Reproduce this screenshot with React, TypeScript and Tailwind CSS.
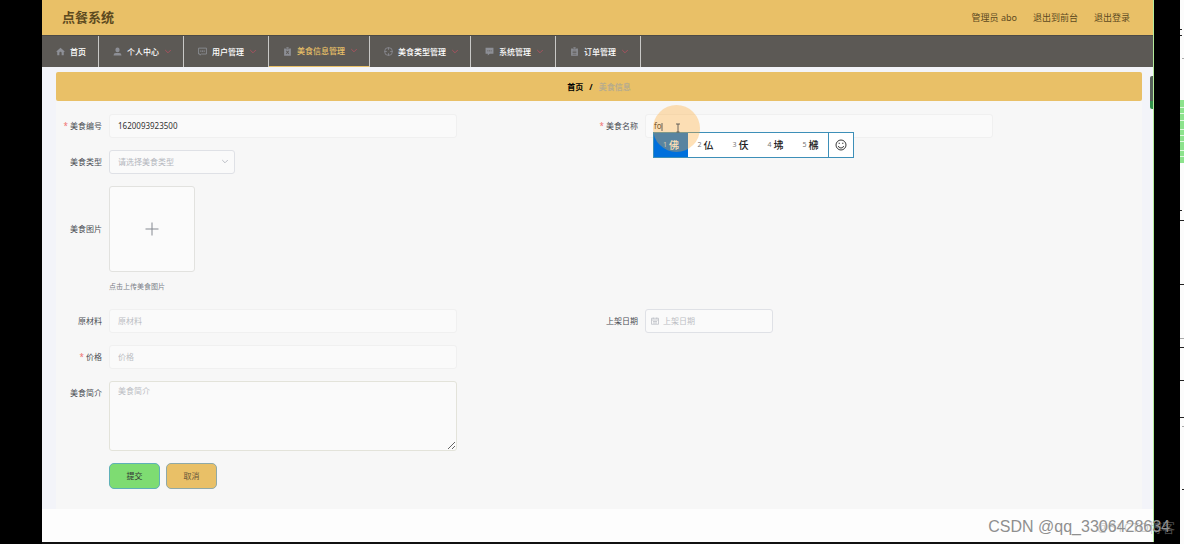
import type { ReactNode } from "react";

const iconPaths: Record<string, ReactNode> = {
  home: (
    <path
      fill="currentColor"
      d="M8 1.500 1 7.600v1.200h1.200V14a.8.8 0 0 0 .8.8h3V10.500a2 2 0 0 1 4 0v4.300h3a.8.8 0 0 0 .8-.8V8.800H15V7.600z"
    />
  ),
  user: (
    <path
      fill="currentColor"
      d="M8 1a3.700 3.700 0 0 0-3.700 3.700v1.100a3.700 3.700 0 0 0 7.400 0V4.700A3.700 3.700 0 0 0 8 1zM5 10.500A4 4 0 0 0 1 14.500V15h14v-.5a4 4 0 0 0-4-4z"
    />
  ),
  chat: (
    <>
      <path fill="none" stroke="currentColor" strokeWidth="1.500" d="M1 2h14v10.500H6L3.500 14.500v-2H1z" />
      <path fill="currentColor" d="M4 6.300h2v2H4zM7 6.300h2v2H7zM10 6.300h2v2h-2z" />
    </>
  ),
  claim: (
    <>
      <path fill="currentColor" fillRule="evenodd" d="M2 2.500h3V4h6V2.500h3V15.500H2zM5 7l2 2.500L5 12l1 1 2-2.200 2 2.200 1-1-2-2.500L11 7l-1-1-2 2.200L6 6z" />
      <path fill="currentColor" d="M6 .5h4V3H6z" />
    </>
  ),
  aim: (
    <g fill="none" stroke="currentColor" strokeWidth="1.400">
      <circle cx="8" cy="8" r="7" />
      <path d="M8 1v4M8 11v4M1 8h4M11 8h4" />
    </g>
  ),
  message: (
    <path fill="currentColor" fillRule="evenodd" d="M1 1.500h14v10.500H8.500L5 15v-3H1zM4 6v1.500h2V6zm3 0v1.500h2V6zm3 0v1.500h2V6z" />
  ),
  order: (
    <>
      <path fill="currentColor" fillRule="evenodd" d="M2 2.500h3V4h6V2.500h3V15.500H2zM4.500 6.500V8h7V6.500zm0 3V11h7V9.500zm0 3v1h7v-1z" />
      <path fill="currentColor" d="M6 .5h4V3H6z" />
    </>
  ),
};

function Icon({ name }: { name: string }) {
  return (
    <svg viewBox="0 0 16 16" className="size-[9px] shrink-0 text-[#8d8f96]" aria-hidden="true">
      {iconPaths[name]}
    </svg>
  );
}

function Chevron({ className }: { className: string }) {
  return (
    <svg viewBox="0 0 10 10" className={className} fill="none" stroke="currentColor" strokeWidth="1.200" aria-hidden="true">
      <path d="M1.500 2.500l3.500 3.500 3.500-3.500" />
    </svg>
  );
}

const menus = [
  { icon: "user", label: "个人中心" },
  { icon: "chat", label: "用户管理" },
  { icon: "claim", label: "美食信息管理", active: true },
  { icon: "aim", label: "美食类型管理" },
  { icon: "message", label: "系统管理" },
  { icon: "order", label: "订单管理" },
];

function Header() {
  return (
    <header className="flex h-[35px] items-center justify-between bg-[#e9c067] pr-6 pl-5 text-[#5d4a1f]">
      <h1 className="text-[13px] font-bold">点餐系统</h1>
      <div className="flex gap-4 text-[9px]">
        <span>管理员 abo</span>
        <a href="#front">退出到前台</a>
        <a href="#logout">退出登录</a>
      </div>
    </header>
  );
}

function Nav() {
  return (
    <nav className="flex h-8 border-t border-[#4c4a46] bg-[#5c5955] text-[8px] font-medium text-white">
      <a href="#home" className="flex items-center gap-[5px] border-r border-[#c9c8c6] pr-[12px] pl-[14px]">
        <Icon name="home" />
        首页
      </a>
      {menus.map((m) => (
        <a
          key={m.label}
          href={"#" + m.icon}
          className={
            m.active
              ? "flex items-center border-r border-b border-r-[#c9c8c6] border-b-[#e9c067] pr-[11px] pl-[14px] text-[#e9c067]"
              : "flex items-center border-r border-[#c9c8c6] pr-[11px] pl-[14px]"
          }
        >
          <Icon name={m.icon} />
          <span className="mx-[5px]">{m.label}</span>
          <Chevron className="size-2 text-[#a8525e]" />
        </a>
      ))}
    </nav>
  );
}

function Field({ id, label, required, tall, children }: { id: string; label: string; required?: boolean; tall?: boolean; children: ReactNode }) {
  return (
    <div className="flex items-start">
      <label
        htmlFor={id}
        className={
          tall
            ? "flex h-[86px] w-[46px] shrink-0 items-center justify-end pr-[7px] whitespace-nowrap"
            : "flex h-6 w-[46px] shrink-0 items-center justify-end pr-[7px] whitespace-nowrap"
        }
      >
        {required && <span className="mr-[2px] text-[#f07070]">*</span>}
        {label}
      </label>
      {children}
    </div>
  );
}

const inputClass =
  "h-6 w-[65%] rounded-[3px] border border-[#f0f0f0] bg-[#fafafa] px-2 pb-[2px] text-[8px] text-[#333] placeholder:text-[#bcbec4] outline-none";

function Ime() {
  const words = ["佛", "仏", "仸", "坲", "梻"];
  return (
    <div className="absolute top-[18px] left-2 z-10 flex h-[26px] w-[201px] border border-[#3d8fb8] bg-white text-[#222]">
      {words.map((w, i) => (
        <span
          key={w}
          className={
            i === 0
              ? "flex w-[34px] items-center justify-center gap-[2px] bg-[#0070dc] text-[10px] font-medium text-white"
              : "flex w-[35px] items-center justify-center gap-[2px] text-[10px] font-medium"
          }
        >
          <span className={i === 0 ? "text-[7px] font-normal text-[#c5dcee]" : "text-[7px] font-normal text-[#777]"}>{i + 1}</span>
          {w}
        </span>
      ))}
      <span className="flex flex-1 items-center justify-center border-l border-[#3d8fb8]">
        <svg viewBox="0 0 12 12" className="size-3" fill="none" stroke="#222" strokeWidth="0.900" aria-hidden="true">
          <circle cx="6" cy="6" r="5" />
          <path d="M3.300 7a2.800 2.800 0 0 0 5.400 0" />
          <path d="M4.200 3.700v1.300M7.800 3.700v1.300" />
        </svg>
      </span>
    </div>
  );
}

function FoodForm() {
  return (
    <form className="grid gap-y-3 bg-[#f7f7f7] px-[7px] pt-[13px] pb-5 text-[8px] text-[#4c4f55]">
      <div className="grid grid-cols-2">
        <Field id="code" label="美食编号" required>
          <input id="code" defaultValue="1620093923500" className={inputClass} />
        </Field>
        <Field id="name" label="美食名称" required>
          <div className="relative flex flex-1">
            <input id="name" defaultValue="fo" className="h-6 w-[71%] rounded-[3px] border border-[#f0f0f0] bg-[#fafafa] px-2 pb-[2px] text-[8px] text-[#333] outline-none" />
            <Ime />
            <span className="absolute -top-[9px] left-2 z-20 size-[47px] rounded-full bg-[#ffaa32]/35" />
            <svg viewBox="0 0 26 10" className="absolute top-[9px] left-[16px] z-30 h-[10px] w-[26px]" fill="none" stroke="#444" strokeWidth="0.800" aria-hidden="true">
              <path d="M1 0v8M15 1h4M17 1v8M15.500 9h3" />
            </svg>
          </div>
        </Field>
      </div>

      <Field id="kind" label="美食类型">
        <div className="relative">
          <select id="kind" className="h-6 w-[126px] appearance-none rounded-[3px] border border-[#dfe1e6] bg-[#fafafa] px-2 text-[8px] text-[#b4b7be] outline-none">
            <option>请选择美食类型</option>
          </select>
          <Chevron className="pointer-events-none absolute top-2 right-[6px] size-2 text-[#b9bcc3]" />
        </div>
      </Field>

      <Field id="picture" label="美食图片" tall>
        <div>
          <button id="picture" type="button" aria-label="点击上传美食图片" className="flex size-[86px] items-center justify-center rounded-[3px] border border-[#e2e2df] bg-[#fbfbfb]">
            <svg viewBox="0 0 14 14" className="size-[14px]" stroke="#858991" aria-hidden="true">
              <path d="M7 .5v13M.5 7h13" />
            </svg>
          </button>
          <p className="mt-1 h-[21px] text-[7px] leading-[21px] text-[#7b7f87]">点击上传美食图片</p>
        </div>
      </Field>

      <div className="grid grid-cols-2">
        <Field id="material" label="原材料">
          <input id="material" placeholder="原材料" className={inputClass} />
        </Field>
        <Field id="date" label="上架日期">
          <div className="relative">
            <input id="date" placeholder="上架日期" className="h-6 w-[128px] rounded-[3px] border border-[#dfe1e6] bg-[#fafafa] pr-2 pb-[2px] pl-[17px] text-[8px] placeholder:text-[#bcbec4] outline-none" />
            <svg viewBox="0 0 16 16" className="absolute top-2 left-[6px] size-2" fill="none" stroke="#b9bcc3" strokeWidth="1.500" aria-hidden="true">
              <path d="M1 2.500h14v12H1zM1 6h14M4.500 1v3M11.500 1v3M4 9h8M4 12h8" />
            </svg>
          </div>
        </Field>
      </div>

      <div className="grid grid-cols-2">
        <Field id="price" label="价格" required>
          <input id="price" placeholder="价格" className={inputClass} />
        </Field>
      </div>

      <div className="grid grid-cols-2">
        <Field id="intro" label="美食简介">
          <textarea
            id="intro"
            placeholder="美食简介"
            className="block h-[70px] w-[65%] resize rounded-[3px] border border-[#e3e3da] bg-[#fafafa] px-2 py-[3px] text-[8px] leading-3 placeholder:text-[#bcbec4] outline-none"
          />
        </Field>
      </div>

      <div className="flex gap-[6px] pl-[46px]">
        <button type="submit" className="h-[26px] w-[51px] rounded-[5px] border border-[#5fb0b8] bg-[#7edc72] text-[#333]">
          提交
        </button>
        <button type="button" className="h-[26px] w-[51px] rounded-[5px] border border-[#8fa9a8] bg-[#e9c067] text-[#66573a]">
          取消
        </button>
      </div>
    </form>
  );
}

function EdgeStrip() {
  return (
    <aside className="w-1 shrink-0 bg-[#fcfcfc]">
      <svg viewBox="0 0 4 544" className="block w-1" aria-hidden="true">
        <path fill="none" stroke="#222" d="M0 29.500h2M0 35.500h2M0 210.500h2M0 220.500h4M0 284.500h4M0 347.500h4M0 380.500h4M0 417.500h4M2 489.500h2" />
        <path fill="none" stroke="#aaa" d="M2 58.500h2M0 338.500h4M2 426.500h2" />
        <path fill="#8ce38c" d="M0 100h4v63H0z" />
        <path fill="none" stroke="#e0f8e0" d="M0 107.500h4M0 113.500h4M0 120.500h4M0 129.500h4M0 135.500h4M0 141.500h4M0 150.500h4M0 156.500h4" />
      </svg>
    </aside>
  );
}

export default function App() {
  return (
    <div className="relative flex min-h-screen bg-black font-['Noto_Sans','Noto_Sans_CJK_SC',sans-serif]">
      <div className="w-[42px] shrink-0" />
      <div className="relative flex min-w-0 flex-1 flex-col border-b-2 border-[#111]">
        <Header />
        <Nav />
        <main className="bg-[#f3f4f9] pt-[5px] pr-3 pl-[14px]">
          <div className="flex h-[29px] items-center justify-center gap-[6px] rounded-[2px] bg-[#e9c067] text-[8px] font-bold text-black">
            <a href="#home">首页</a>
            <span>/</span>
            <span className="text-[#b8ac8c]">美食信息</span>
          </div>
          <FoodForm />
        </main>
        <div className="flex-1 bg-[#fdfdfd]" />
        <span className="absolute top-[76px] right-0 h-[33px] w-1 rounded-l-[2px] border-b-8 border-[#33914c] bg-[#56605a]" />
        <span className="absolute inset-y-0 right-0 w-px bg-[#b4ec9c]" />
      </div>
      <div className="w-[26px] shrink-0" />
      <EdgeStrip />
      <p className="absolute right-[9px] bottom-[8px] text-[13px] leading-[18px] text-[#999]/50">@51CTO博客</p>
      <p className="absolute right-[14px] bottom-[7px] font-['Liberation_Sans',sans-serif] text-[16px] leading-5 text-[#8f8f8f]">
        CSDN @qq_3306428634
      </p>
    </div>
  );
}
